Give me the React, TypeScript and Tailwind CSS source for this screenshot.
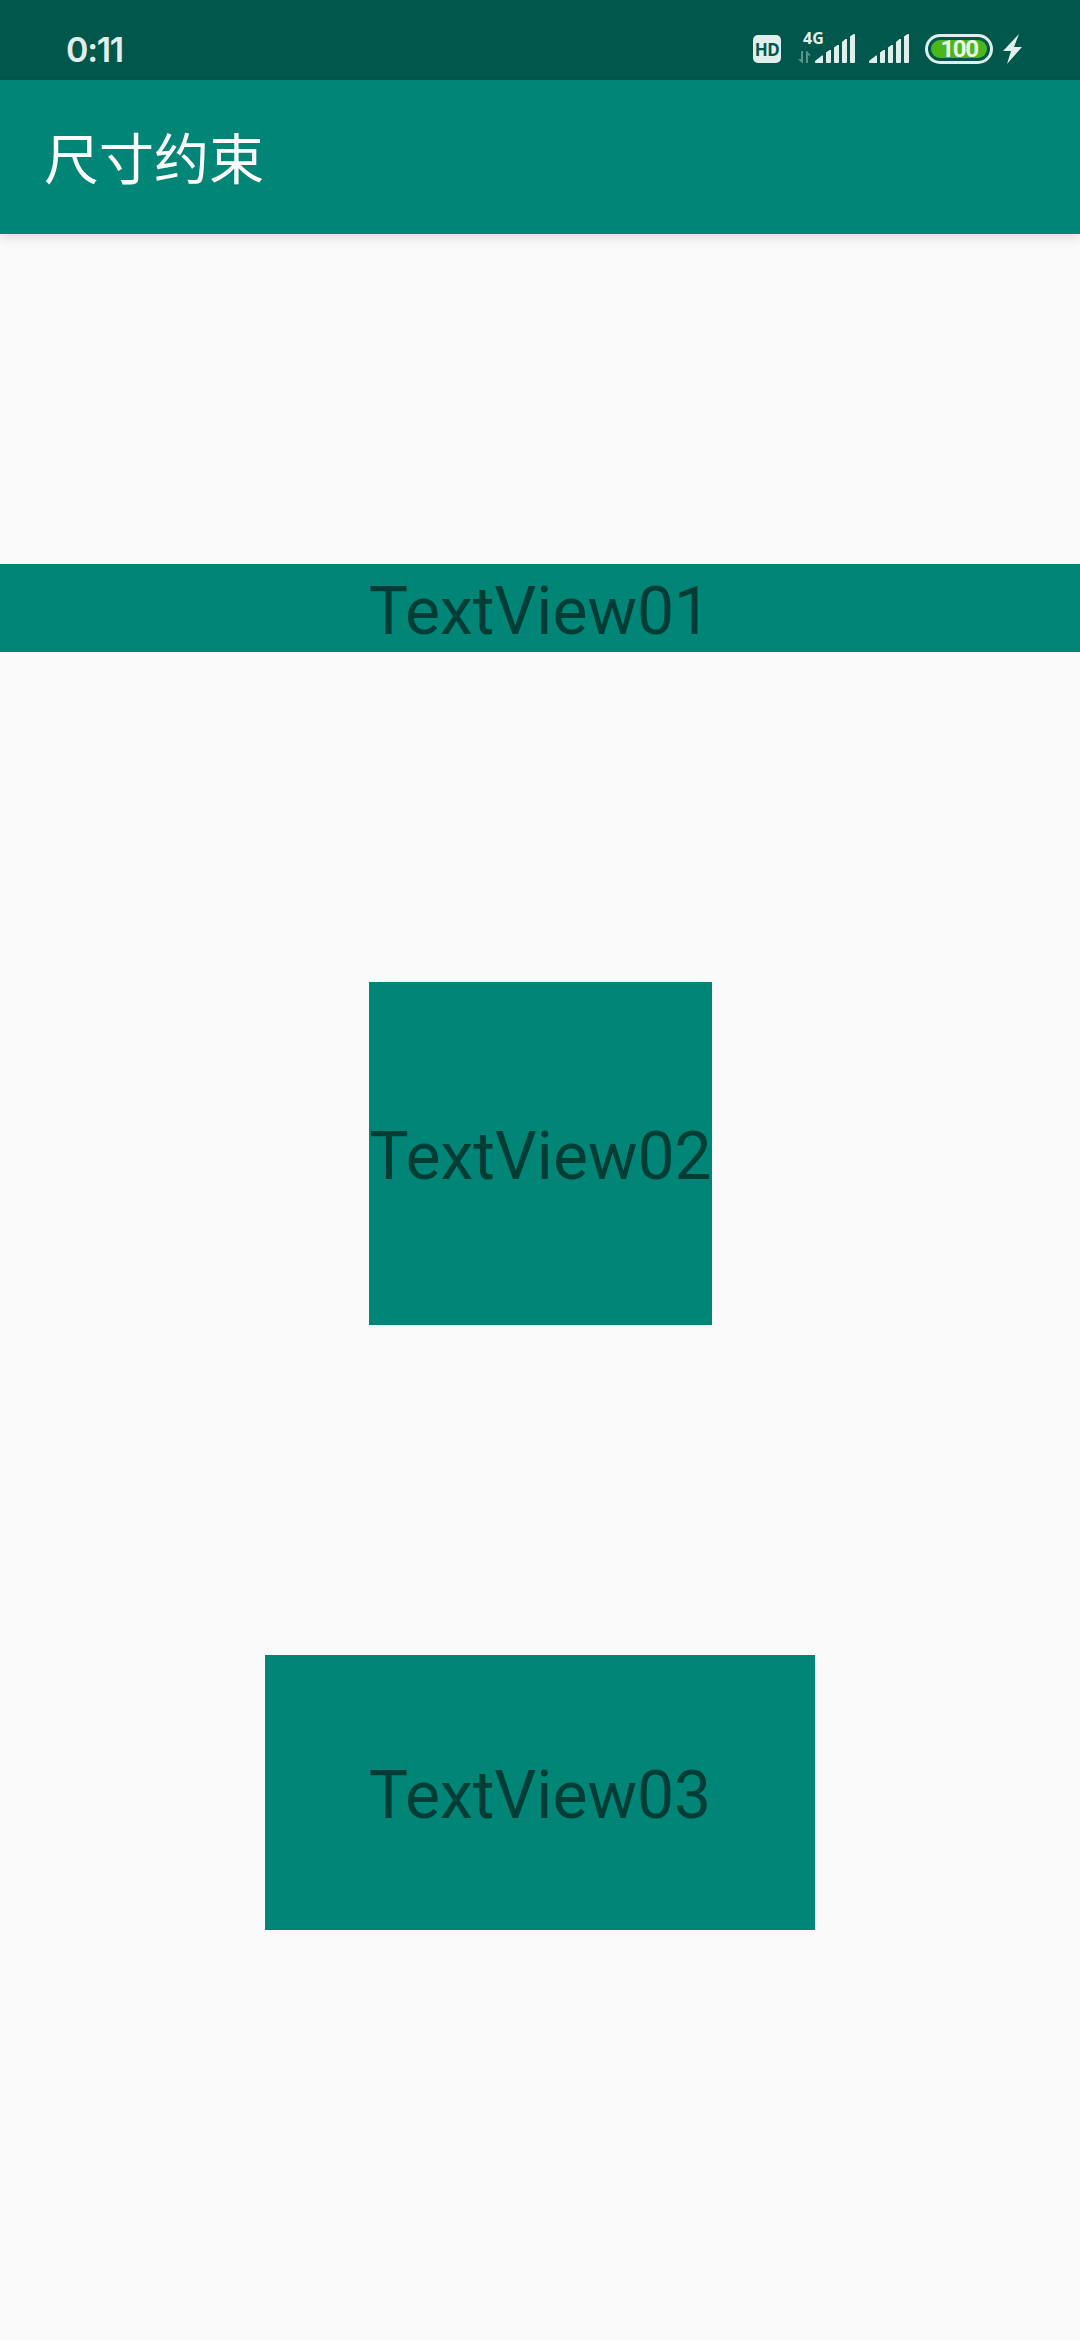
import React from "react";

function Signal() {
  return (
    <svg width="40" height="30" viewBox="0 0 40 30" className="block shrink-0" fill="#e0efec">
      <path d="M0 28.2 V27 L7 21.5 H8 V29 H1 Q0 29 0 28.2Z" />
      <path d="M11 18.5 L14.5 16 H16 V28 Q16 29 15 29 H12 Q11 29 11 28Z" />
      <path d="M19 13.5 L22.5 11 H24 V28 Q24 29 23 29 H20 Q19 29 19 28Z" />
      <path d="M27 8 L30.5 5 H32 V28 Q32 29 31 29 H28 Q27 29 27 28Z" />
      <path d="M35 2.5 L38.5 0 H39 Q40 0 40 1 V28 Q40 29 39 29 H36 Q35 29 35 28Z" />
    </svg>
  );
}

function StatusBar() {
  return (
    <header className="flex h-20 shrink-0 items-start bg-[#00574b] pl-[66px] text-[#e0efec]">
      <div className="mt-[30px] h-10 font-['Inter',sans-serif] text-[34px] leading-10 font-semibold tracking-[-1.3px]">0:11</div>
      <div className="mt-[34px] mr-[58px] ml-auto flex h-[30px] items-start">
        <div className="mt-px flex h-7 w-7 items-center justify-center rounded-[5px] bg-[#e0efec] pt-px font-['Noto_Sans',sans-serif] text-[17px] leading-7 font-bold tracking-[-0.5px] text-[#00574b]">
          HD
        </div>
        <div className="relative ml-[17px] h-[30px] w-[17px]">
          <span className="absolute top-[-4px] left-[5px] font-['Noto_Sans',sans-serif] text-[16px] leading-4 font-bold">4G</span>
          <svg width="13" height="13" viewBox="0 0 13 13" className="absolute top-[17px] left-0 opacity-40" fill="#e0efec">
            <path d="M3 0 H5 V12 H4 L0 8 H3Z" />
            <path d="M8 12 V0 H9 L13 4.5 H10 V12Z" />
          </svg>
        </div>
        <Signal />
        <div className="ml-3.5">
          <Signal />
        </div>
        <div className="ml-4 flex h-[30px] w-[68px] items-center justify-center rounded-full border-[3px] border-[#e0efec]">
          <div className="flex h-[18px] w-14 items-center justify-center rounded-full bg-[#4ab81c] font-['Roboto','Liberation_Sans',sans-serif] text-[24px] leading-[18px] font-bold tracking-[-1.5px] text-[#eefbe6]">
            100
          </div>
        </div>
        <svg width="19" height="30" viewBox="0 0 19 30" className="ml-2.5 block" fill="#e0efec">
          <path d="M16 0 L0 17 H8 L4 30 L19 13 H11Z" />
        </svg>
      </div>
    </header>
  );
}

export default function App() {
  return (
    <div className="flex h-[2340px] w-[1080px] flex-col overflow-hidden bg-[#fafafa]">
      <StatusBar />
      <div className="z-10 flex h-[154px] shrink-0 items-center bg-[#008577] pb-[4px] pl-11 shadow-[0_4px_10px_rgba(0,0,0,0.12)]">
        <h1 className="font-['Noto_Sans_CJK_SC',sans-serif] text-[55px] leading-[80px] font-normal text-white">尺寸约束</h1>
      </div>
      <main className="flex flex-1 flex-col items-center gap-[330px] pt-[330px] font-['Roboto','Liberation_Sans',sans-serif] text-[66px] leading-[78px] text-[#003d36]">
        <div className="flex h-[88px] w-full items-center justify-center bg-[#008577] pt-2">TextView01</div>
        <div className="ml-px flex h-[343px] w-[343px] items-center justify-center bg-[#008577] pt-[7px]">TextView02</div>
        <div className="flex h-[275px] w-[550px] items-center justify-center bg-[#008577] pt-[7px]">TextView03</div>
      </main>
    </div>
  );
}
